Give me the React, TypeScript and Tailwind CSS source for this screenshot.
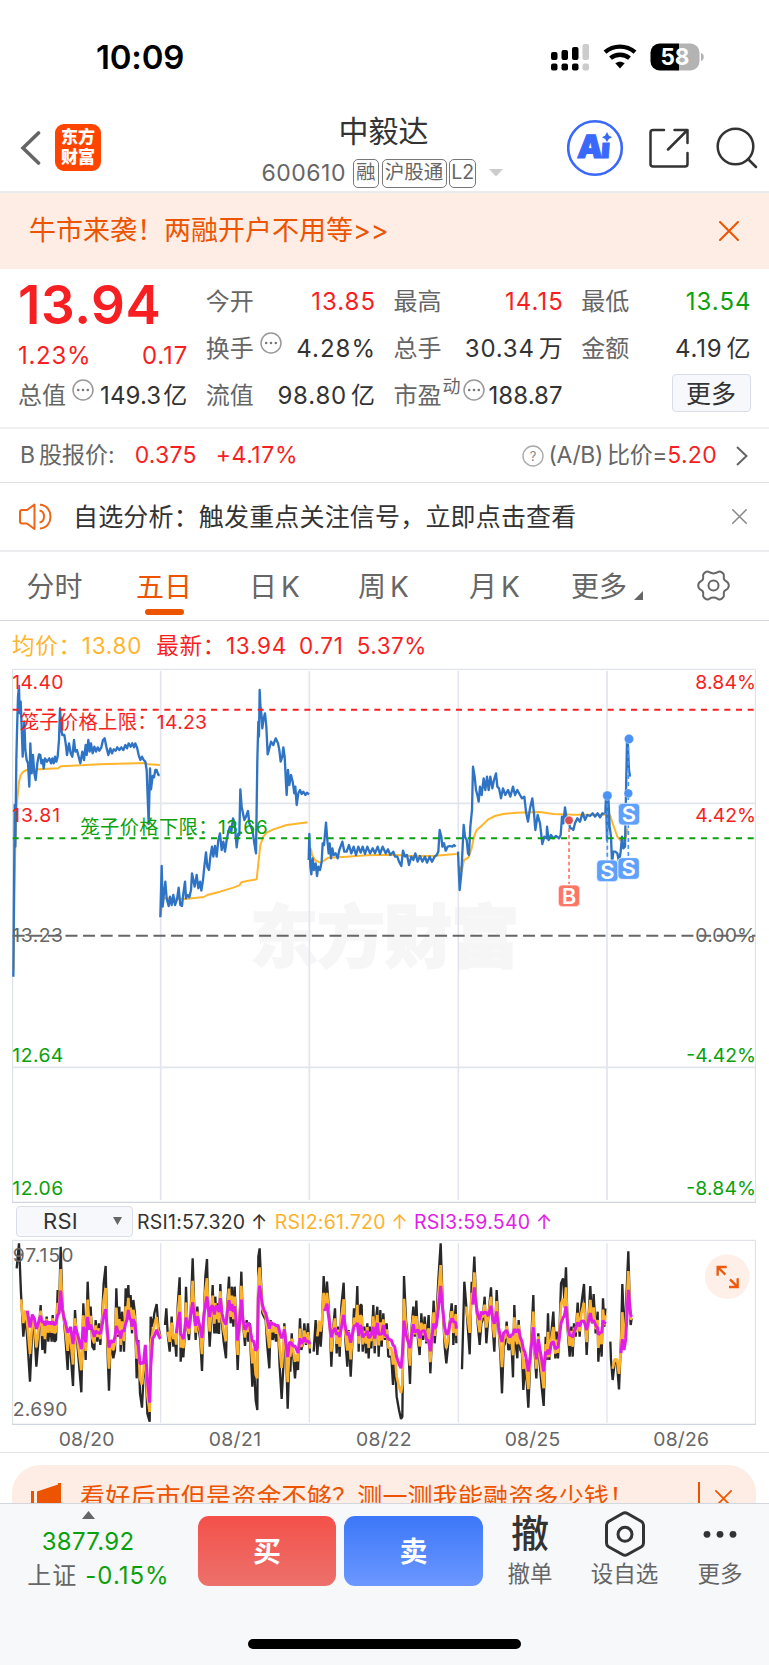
import React from 'react';

type Point = [number, number];

const parse = (s: string, dx = 0, dy = 0): Point[] =>
  s.trim().split(/\s+/).map((p) => {
    const [x, y] = p.split(',').map(Number);
    return [x + dx, y + dy];
  });

const toPoints = (pts: Point[]) => pts.map(([x, y]) => `${x},${y.toFixed(1)}`).join(' ');

// Value of a keyed line at x, flat beyond both ends
const valueAt = (keys: Point[], x: number) => {
  if (x <= keys[0][0]) return keys[0][1];
  for (let i = 1; i < keys.length; i++) {
    const [x0, y0] = keys[i - 1];
    const [x1, y1] = keys[i];
    if (x <= x1) return y0 + ((y1 - y0) * (x - x0)) / (x1 - x0);
  }
  return keys[keys.length - 1][1];
};

const priceDays: Point[][] = [
  parse(`40,950 42,700 44,435 46,560 49,300 51,215 54,110 57,78 59,160 62,125 65,200 68,290 73,185 76,270 80,300 84,310 88,380 91,250 95,340 99,285 103,340 107,360 112,310 117,283 121,285 124,310 128,300 131,325 135,295 141,305 148,295 153,310 157,295 161,310 165,290 169,305 173,290 177,240 180,145 184,210 187,225 193,225 197,250 201,285 207,250 212,280 217,290 222,240 226,275 231,270 236,290 241,310 247,275 252,300 257,255 260,285 265,240 269,275 273,250 278,280 283,260 288,275 293,262 298,272 304,262 309,240 314,235 319,260 325,285 331,265 336,280 341,268 347,272 352,262 358,270 364,262 370,270 376,255 381,265 386,250 392,260 397,250 402,262 406,250 411,262 416,285 421,300 426,290 431,300 436,305 440,330 446,492 450,325 453,388 458,348 462,352 466,330 470,330 475,345 479,345`),
  parse(`481,772 485,618 488,740 492,700 496,665 500,715 506,738 510,710 515,735 520,705 525,735 531,718 536,683 541,735 546,738 550,700 555,665 558,715 563,705 568,712 573,690 576,640 580,660 584,680 590,645 595,685 600,665 604,692 609,660 613,620 618,577 622,620 627,630 631,590 636,560 640,590 645,558 650,590 655,540 660,520 665,570 670,545 675,575 680,540 685,515 690,500 694,515 699,475 704,490 710,562 715,520 718,525 721,388 725,440 729,460 733,480 738,470 744,453 748,490 753,500 758,515 763,550 768,580 772,300 775,185 777,230 779,90 781,135 784,160 787,205 790,180 795,160 799,200 803,283 808,265 813,245 820,255 827,235 834,250 838,270 842,305 847,290 850,262 854,290 858,370 860,405 864,330 868,375 873,345 878,365 883,400 886,380 890,435 895,400 900,390 905,402 910,395 916,405 921,398 927,403`),
  parse(`26,540 28,462 31,560 34,583 38,535 42,570 47,550 51,588 55,560 60,570 65,545 68,490 72,495 78,428 82,480 86,520 89,490 93,535 97,505 101,525 107,520 113,535 118,510 127,485 133,515 140,515 147,495 154,520 161,500 168,525 175,500 182,518 188,500 195,522 202,500 210,520 218,505 225,520 233,500 240,522 248,500 257,520 264,508 271,525 280,515 285,530 292,530 297,545 304,558 309,512 315,530 321,525 327,555 334,530 340,540 346,520 353,545 360,528 367,545 375,530 381,548 389,530 396,545 404,530 410,525 415,515 419,450 424,470 427,500 432,490 437,512 443,500 450,498 457,500 462,495 467,500`, 900, 60),
  parse(`474,515 479,630 484,580 488,500 491,435 495,470 500,480 504,520 507,525 511,440 516,390 519,260 524,290 528,330 532,345 536,365 540,320 545,345 551,295 556,330 561,290 566,330 571,290 577,325 582,300 588,280 592,320 597,325 603,355 609,325 616,345 624,330 631,350 639,320 645,345 652,330 660,345 666,355 673,350 678,395 684,425 690,385 697,355 702,400 706,450 713,405 720,430 727,492 733,470 740,475 741,440 746,480 753,465 760,475 768,468 777,475 782,465 786,410 790,430 795,382 799,410 803,425 807,420 810,445 815,445 820,450 825,430 832,415 840,425 848,398 855,420 862,405 870,408 878,400 885,410 893,400 900,412 907,400 914,402`, 900, 60),
  parse(`916,400 918,350 921,480 925,350 929,440 933,470 936,550 940,515 946,515 952,520 957,545 962,515 966,470 970,505 975,500 978,340 981,185 983,180 987,270 990,290`, 900, 60),
];

const averageDays: Point[][] = [
  parse(`41,930 43,700 46,560 50,440 57,365 62,345 70,335 80,330 130,327 175,325 182,319 215,317 300,313 435,309 445,313 480,315`),
  parse(`483,765 485,730 488,715 555,717 612,711 622,705 660,695 700,683 718,676 724,667 745,662 770,658 774,620 781,555 790,530 800,518 820,508 860,495 890,491 923,487`),
  parse(`33,505 36,525 45,540 60,548 72,542 85,533 140,530 200,526 280,524 330,528 400,528 440,524 470,522`, 900, 60),
  parse(`478,560 485,575 492,540 505,533 515,505 522,470 530,450 545,437 565,418 585,408 610,402 650,398 720,396 760,402 820,404 915,404`, 900, 60),
  parse(`921,400 930,405 938,430 945,450 952,470 960,480 972,482 978,470 983,445`, 900, 60),
];

const rsiFast: Point[][] = [
  parse(`50,265 57,190 63,340 70,470 76,400 82,480 90,605 97,440 103,450 109,560 114,500 118,430 122,375 127,510 131,440 135,520 140,410 145,485 150,430 155,485 158,405 163,485 168,480 173,330 177,400 182,200 187,370 190,400 196,470 203,570 207,470 212,520 219,618 225,390 230,470 236,540 244,637 250,370 257,540 263,305 268,440 272,380 277,500 283,510 287,420 292,485 297,430 301,495 307,400 311,310 317,258 322,500 327,632 332,480 340,535 345,510 349,325 354,470 358,380 362,515 366,395 372,515 377,325 381,380 385,315 389,410 392,345 396,460 400,360 405,400 410,595 415,480 420,640 426,683 430,600 436,530 442,700 449,725 452,410 458,440 463,400 470,372 475,440 481,470`),
  parse(`495,435 499,385 503,460 509,515 515,410 520,500 524,470 529,530 533,380 539,292 542,545 546,470 550,532 555,450 558,320 562,440 567,480 572,400 578,235 583,390 587,480 592,380 597,455 601,480 606,573 611,430 616,290 621,237 625,400 629,500 633,430 638,315 642,440 643,460 646,350 650,460 653,370 657,462 661,312 666,430 671,485 678,535 682,370 687,290 692,430 696,320 700,440 704,320 708,430 713,570 718,440 724,275 729,430 735,498 740,420 745,485 750,430 752,510 757,620 761,530 767,660 772,690 775,230 779,205 783,300 787,400 792,410 797,420 802,500 808,565 812,420 818,480 823,450 828,485 834,440 839,560 845,657 850,560 853,430 858,500 863,686 868,540 871,575 875,460 879,520 885,595 889,540 894,570 900,415 904,510 909,490 913,430 918,495 924,430 930,520`),
  parse(`941,515 947,420 952,525 957,440 962,500 966,440 971,288 976,390 981,305 986,380 990,450 994,560 999,450 1005,385 1010,520 1014,440 1019,530 1024,380 1031,308 1036,480 1042,560 1046,450 1052,590 1058,470 1062,385 1067,440 1072,318 1076,515 1081,375 1085,375 1088,515 1093,440 1098,520 1102,430 1106,535 1110,440 1114,505 1120,375 1124,520 1128,420 1132,380 1136,530 1141,390 1145,500 1150,400 1155,480 1160,430 1165,530 1174,530 1179,615 1184,530 1190,650 1197,690 1203,717 1207,710 1212,288 1218,420 1224,480 1230,612 1235,440 1240,380 1244,470 1249,362 1254,480 1259,525 1264,400 1269,480 1274,410 1279,490 1286,405 1291,580 1296,470 1301,362 1304,490 1309,420 1315,300 1322,190 1328,370 1334,500 1339,550 1344,500 1349,430 1355,370 1359,430 1360,495 1367,375 1369,490`),
  parse(`234,568 241,305 247,380 252,450 257,523 263,305 266,330 271,230 276,360 281,430 287,495 292,430 296,420 302,350 307,490 313,410 321,322 326,440 331,515 338,330 344,450 349,520 354,640 359,500 363,490 368,425 373,510 378,505 382,480 387,592 391,375 396,500 400,535 404,420 409,510 414,520 418,630 423,560 428,600 433,683 438,560 443,450 448,345 452,520 457,595 463,460 468,560 473,620 479,678 485,470 488,540 492,400 496,540 502,460 508,395 514,535 518,455 522,535 527,440 531,310 537,295 541,360 546,262 551,450 557,530 562,440 566,530 570,430 575,470 581,368 587,470 592,375 600,312 608,525 613,420 619,318 624,430 629,342 635,460 641,395 643,545 648,460 653,530 657,355 661,440 664,385`, 1152),
  parse(`679,485 681,540 686,600 692,548 699,550 705,628 711,480 715,312 720,440 725,400 733,214 738,400 740,435 743,415`, 1152),
];

const rsiSlow: Point[][] = [
  parse(`82,380 88,400 91,430 95,395 105,415 110,435 120,410 135,425 150,425 165,428 176,410 182,350 188,400 200,430 206,455 212,430 219,475 225,445 232,455 244,490 250,450 257,480 263,425 268,450 275,435 283,465 290,450 298,465 306,440 317,405 327,485 340,480 350,450 362,470 372,445 378,445 385,400 395,440 402,420 408,450 415,500 420,540 424,520 430,545 436,490 440,560 449,660 453,560 457,480 462,480 470,460 481,478`),
  parse(`529,450 539,410 543,465 550,470 558,425 567,440 575,385 580,385 586,435 593,410 600,435 606,460 611,410 621,365 628,405 634,370 638,385 645,400 650,365 655,400 661,360 668,410 678,420 687,370 693,390 697,375 702,400 705,380 713,470 720,420 724,370 730,430 738,450 745,420 752,450 760,475 765,480 771,515 775,370 779,332 785,360 790,385 800,400 808,430 815,425 825,430 835,435 845,450 853,450 858,490 863,510 870,470 876,500 885,485 893,520 898,480 905,490 915,475 920,490 930,488`),
  parse(`971,400 981,380 988,430 994,460 1003,450 1014,460 1022,465 1030,415 1040,450 1048,460 1053,478 1060,450 1070,430 1075,465 1082,440 1090,475 1100,450 1110,475 1118,440 1125,475 1132,435 1140,475 1150,440 1156,470 1165,470 1178,475 1185,500 1195,530 1204,545 1210,450 1212,440 1220,480 1230,490 1240,440 1248,470 1255,440 1260,475 1270,445 1280,480 1291,505 1300,440 1310,440 1315,400 1322,335 1328,390 1335,440 1343,460 1350,430 1360,415 1369,440`),
  parse(`266,380 271,335 278,390 283,405 287,410 292,390 300,410 307,385 315,415 321,385 326,415 331,420 336,390 345,450 352,470 360,450 370,455 380,470 387,445 392,460 400,440 410,470 418,490 425,520 433,560 440,520 448,455 457,530 463,480 470,510 479,560 485,520 495,525 503,490 510,500 520,510 530,450 537,430 546,395 552,440 560,470 570,460 575,440 582,435 590,435 597,420 602,450 608,440 619,410 627,435 633,425 640,450 650,460 657,430 664,430`, 1152),
  parse(`711,525 715,500 720,520 724,510 728,430 733,345 738,380 741,410`, 1152),
];

// The slower averages follow the fast one with less swing
const rsiLines = rsiFast.map((fast, i) => {
  const slow = rsiSlow[i];
  const start = slow[0][0];
  return {
    fast,
    mid: fast.slice(2).map(([x, y]): Point => [x, 0.55 * y + 0.45 * valueAt(slow, x)]),
    slow: fast.filter(([x]) => x >= start).map(([x, y]): Point => [x, 0.88 * valueAt(slow, x) + 0.12 * y]),
  };
});

const RED = '#f71f22';
const GREEN = '#0ba10b';
const dayLines = [482, 928, 1375, 1821];

const ChartText = (props: { x: number; y: number; w: number; fill: string; size?: number; end?: boolean; children: string }) => (
  <text x={props.x} y={props.y} fontSize={props.size ?? 58} textLength={props.w} fill={props.fill} textAnchor={props.end ? 'end' : 'start'}>
    {props.children}
  </text>
);

const TradeBadge = ({ x, y, label, color }: { x: number; y: number; label: string; color: string }) => (
  <g>
    <rect x={x} y={y} width="64" height="65" rx="12" fill={color} stroke="#fff" strokeWidth="2" />
    <text x={x + 32} y={y + 56} fontSize="66" fontWeight="600" fill="#fff" textAnchor="middle">{label}</text>
  </g>
);

const PriceChart = () => (
  <svg className="block w-[769px] h-[544px]" viewBox="0 0 2307 1632">
    <text x="750" y="905" fontSize="204" fontWeight="900" textLength="808" fill="#f6f6f6" stroke="#f6f6f6" strokeWidth="5">东方财富</text>
    <g stroke="#e2e5ee" strokeWidth="5">
      <path d="M38 430H2266M38 1222H2266" />
      {dayLines.map((x) => <path key={x} d={`M${x} 33V1620`} />)}
    </g>
    <path d="M38 28H2266V1627H38Z" fill="none" stroke="#dadee6" strokeWidth="3" />
    <path d="M36 1627H2268" stroke="#ccd2dc" strokeWidth="3" />
    <g fill="none" strokeLinejoin="round">
      {averageDays.map((d, i) => <polyline key={i} points={toPoints(d)} stroke="#ffb52c" strokeWidth="6" />)}
      {priceDays.map((d, i) => <polyline key={i} points={toPoints(d)} stroke="#2f74c4" strokeWidth="7" />)}
    </g>
    <path d="M38 149H2266" stroke={RED} strokeWidth="6" strokeDasharray="18 17" />
    <path d="M38 535H2266" stroke={GREEN} strokeWidth="6" strokeDasharray="18 17" />
    <path d="M38 827H2266" stroke="#666" strokeWidth="6" strokeDasharray="36 16.800" />
    <ChartText x={37} y={87} w={153} fill={RED}>14.40</ChartText>
    <ChartText x={37} y={486} w={143} fill={RED}>13.81</ChartText>
    <ChartText x={37} y={845} w={152} fill="#666">13.23</ChartText>
    <ChartText x={37} y={1207} w={153} fill={GREEN}>12.64</ChartText>
    <ChartText x={37} y={1605} w={153} fill={GREEN}>12.06</ChartText>
    <ChartText x={2268} y={87} w={182} fill={RED} end>8.84%</ChartText>
    <ChartText x={2268} y={486} w={182} fill={RED} end>4.42%</ChartText>
    <ChartText x={2268} y={845} w={182} fill="#666" end>0.00%</ChartText>
    <ChartText x={2268} y={1207} w={209} fill={GREEN} end>-4.42%</ChartText>
    <ChartText x={2268} y={1605} w={209} fill={GREEN} end>-8.84%</ChartText>
    <ChartText x={59} y={208} w={562} fill={RED}>笼子价格上限：14.23</ChartText>
    <ChartText x={241} y={522} w={562} fill={GREEN}>笼子价格下限：13.66</ChartText>
    <path d="M1707 485V672" stroke="#fd7565" strokeWidth="5" strokeDasharray="11 9" />
    <path d="M1822 410V600M1885 240V595" stroke="#4593ff" strokeWidth="5" strokeDasharray="12 9" />
    <circle cx="1707" cy="481" r="13" fill="#dc4f51" stroke="#fff" strokeWidth="2" />
    <circle cx="1822" cy="407" r="14" fill="#4a92f6" stroke="#fff" strokeWidth="1" />
    <circle cx="1887" cy="237" r="14" fill="#4a92f6" stroke="#fff" strokeWidth="1" />
    <circle cx="1885" cy="400" r="13" fill="#4a92f6" stroke="#fff" strokeWidth="1" />
    <TradeBadge x={1675} y={675} label="B" color="#fd7565" />
    <TradeBadge x={1790} y={600} label="S" color="#5ea0fb" />
    <TradeBadge x={1854} y={593} label="S" color="#5ea0fb" />
    <TradeBadge x={1855} y={430} label="S" color="#5ea0fb" />
  </svg>
);

const RsiChart = () => (
  <svg className="block w-[769px] h-[214px]" viewBox="0 174 2307 642">
    <g stroke="#e2e5ee" strokeWidth="4">
      {dayLines.map((x) => <path key={x} d={`M${x} 190V728`} />)}
    </g>
    <path d="M38 181H2266V733H38Z" fill="none" stroke="#dadee6" strokeWidth="3" />
    <path d="M36 733H2268" stroke="#ccd2dc" strokeWidth="3" />
    <ChartText x={38} y={709} w={164} fill="#666">2.690</ChartText>
    {rsiLines.map((d, i) => (
      <g key={i} fill="none" strokeLinejoin="bevel">
        <polyline points={toPoints(d.fast)} stroke="#282828" strokeWidth="7" />
        <polyline points={toPoints(d.mid)} stroke="#fdb22d" strokeWidth="8" />
        <polyline points={toPoints(d.slow)} stroke="#e11ee6" strokeWidth="9" />
      </g>
    ))}
    <ChartText x={38} y={245} w={182} fill="#666">97.150</ChartText>
    <circle cx="2182" cy="290" r="67" fill="#fef0e9" />
    <path d="M2153 287V261H2180M2154 262L2176 284M2187 321H2213V295M2212 320L2190 298" fill="none" stroke="#ec5b0d" strokeWidth="7" />
    <ChartText x={176} y={797} w={167} fill="#666">08/20</ChartText>
    <ChartText x={626} y={797} w={157} fill="#666">08/21</ChartText>
    <ChartText x={1068} y={797} w={167} fill="#666">08/22</ChartText>
    <ChartText x={1514} y={797} w={167} fill="#666">08/25</ChartText>
    <ChartText x={1960} y={797} w={167} fill="#666">08/26</ChartText>
  </svg>
);

const More = ({ className = '' }: { className?: string }) => (
  <svg className={`w-[22px] h-[22px] shrink-0 ${className}`} viewBox="0 0 22 22">
    <circle cx="11" cy="11" r="10" fill="none" stroke="#999" strokeWidth="1.5" />
    <circle cx="6.2" cy="11" r="1.3" fill="#777" />
    <circle cx="11" cy="11" r="1.3" fill="#777" />
    <circle cx="15.8" cy="11" r="1.3" fill="#777" />
  </svg>
);

const Close = ({ className }: { className: string }) => (
  <svg className={className} viewBox="0 0 20 20" fill="none" stroke="currentColor" strokeWidth="2" strokeLinecap="round">
    <path d="M1 1L19 19M19 1L1 19" />
  </svg>
);

const StatusBar = () => (
  <div className="h-[110px] flex items-start justify-between pl-[96px] pr-[65px]">
    <span className="mt-[37px] text-[33px] leading-[40px] font-semibold text-black tracking-[-0.200px]">10:09</span>
    <svg className="mt-[43px] w-[153px] h-[29px]" viewBox="0 0 153 29">
      <g fill="#000">
        <rect x="0" y="9" width="6.5" height="8" rx="2" />
        <rect x="10.5" y="7" width="6.5" height="10" rx="2" />
        <rect x="21" y="4" width="6.5" height="13" rx="2" />
        <rect x="0" y="20.5" width="6.5" height="7" rx="2" />
        <rect x="10.5" y="20.5" width="6.5" height="7" rx="2" />
        <rect x="21" y="20.5" width="6.5" height="7" rx="2" />
      </g>
      <rect x="31.5" y="1" width="6.5" height="16" rx="2" fill="#ccc" />
      <rect x="31.5" y="20.5" width="6.5" height="7" rx="2" fill="#ccc" />
      <g fill="none" stroke="#000" strokeWidth="4.3">
        <path d="M54 9.2C62.5 1.8 75.5 1.8 84 9.2" />
        <path d="M59.5 15.2C65 10.6 73 10.6 78.5 15.2" />
      </g>
      <path d="M64.3 20.3C67 18.2 71 18.2 73.7 20.3L69 25.6Z" fill="#000" />
      <clipPath id="battery"><rect x="99.500" y="0.500" width="49" height="27" rx="9" /></clipPath>
      <g clipPath="url(#battery)">
        <rect x="99" y="0" width="29" height="28" fill="#000" />
        <rect x="128" y="0" width="21" height="28" fill="#b3b3b3" />
      </g>
      <path d="M150 10C153.700 11 153.700 17 150 18Z" fill="#b3b3b3" />
      <text x="124" y="22" fontSize="22.500" fontWeight="700" fill="#fff" textAnchor="middle">58</text>
    </svg>
  </div>
);

const Tag = ({ children, className = 'px-[2.500px]' }: { children: React.ReactNode; className?: string }) => (
  <span className={`h-[29px] flex items-center justify-center border border-[#777] rounded-[5px] text-[19.500px] leading-none text-[#666] ${className}`}>{children}</span>
);

const Header = () => (
  <div className="h-[83px] flex justify-between border-b-2 border-[#ebebed]">
    <div className="w-[240px] flex items-start pl-[20px] pt-[14px]">
      <svg className="mt-[7px] w-[21px] h-[34px]" viewBox="0 0 21 34" fill="none" stroke="#666" strokeWidth="3.6" strokeLinecap="round">
        <path d="M18.500 2L3 17L18.500 32" />
      </svg>
      <div className="ml-[14px] w-[46px] h-[47px] rounded-[9px] bg-[#ff4400] flex flex-col items-center justify-center text-white font-black text-[17px] leading-[19.500px]">
        <span>东方</span>
        <span>财富</span>
      </div>
    </div>
    <div className="flex-1 flex flex-col items-center">
      <span className="-ml-[2px] text-[30px] leading-[43px] text-[#333]">中毅达</span>
      <div className="flex items-center h-[34px] mt-[3px] -ml-[5px] gap-[2.500px]">
        <span className="text-[23px] tracking-[0.550px] text-[#666] mr-[4px]">600610</span>
        <Tag>融</Tag>
        <Tag className="w-[65px]">沪股通</Tag>
        <Tag className="w-[27px]">L2</Tag>
        <svg className="ml-[10px] w-[14px] h-[8px]" viewBox="0 0 14 8"><path d="M0 0H14L7 7.500Z" fill="#ccc" /></svg>
      </div>
    </div>
    <div className="w-[240px] flex justify-end pr-[10.500px] pt-[9px]">
      <svg className="w-[192px] h-[58px]" viewBox="0 0 192 58" fill="none">
        <circle cx="28" cy="29" r="26.800" stroke="#3a68fc" strokeWidth="2.600" />
        <g transform="translate(2.500 0) skewX(-4)">
          <text x="10" y="39" fontSize="32" fontWeight="900" fill="#3a68fc" stroke="#3a68fc" strokeWidth="1" textLength="33">Ai</text>
        </g>
        <rect x="34" y="12" width="12" height="11.500" fill="#fff" />
        <path d="M40 13L41.800 16.500L45 18.200L41.800 20L40 23L38.200 20L35 18.200L38.200 16.500Z" fill="#3a68fc" />
        <g stroke="#333" strokeWidth="2.500" strokeLinecap="round" strokeLinejoin="round">
          <path d="M97 11H86C84.500 11 83.500 12 83.500 13.500V45C83.500 46.500 84.500 47.500 86 47.500H118C119.500 47.500 120.500 46.500 120.500 45V34M107.500 11H120.500V24M120.500 11L101 30.500" />
          <circle cx="168.500" cy="27.500" r="17.800" />
          <path d="M181 40L189 48" />
        </g>
      </svg>
    </div>
  </div>
);

type FieldProps = { label: string; value: string; unit?: string; color?: string; icon?: boolean; sup?: string };

const Field = ({ label, value, unit, color = 'text-[#333]', icon, sup }: FieldProps) => {
  const tight = sup || (icon && unit);
  return (
    <div className="h-[47px] flex items-center justify-between whitespace-nowrap">
      <span className="flex items-center text-[#666]">
        {label}
        {sup && <span className="text-[18px] leading-none -mt-[17px] ml-[1px]">{sup}</span>}
        {icon && <More className={sup ? '-mt-[12px] ml-[2px]' : '-mt-[12px] ml-[6px]'} />}
      </span>
      <span className={color}>
        <span className={tight ? 'tracking-[0.100px]' : unit ? 'tracking-[0.800px]' : 'tracking-[1px] -mr-[1px]'}>{value}</span>
        {unit && <span className={tight ? 'ml-[2px]' : 'ml-[4px]'}>{unit}</span>}
      </span>
    </div>
  );
};

const Quote = () => (
  <div className="h-[160px] border-b-2 border-[#f0f0f2] grid grid-cols-4 gap-[18.500px] pl-[18px] pr-[18.500px] pt-[9px] text-[24px] leading-[47px]">
    <div>
      <div className="h-[59px] text-[53px] leading-[55px] font-semibold text-[#f71f22] tracking-[0.600px]">13.94</div>
      <div className="h-[35px] flex justify-between items-center leading-[35px] tracking-[0.700px] text-[#f71f22]">
        <span className="mt-[2px]">1.23%</span>
        <span className="mt-[2px] tracking-[0.900px] -mr-[1px]">0.17</span>
      </div>
      <Field label="总值" value="149.3" unit="亿" icon />
    </div>
    <div>
      <Field label="今开" value="13.85" color="text-[#f71f22]" />
      <Field label="换手" value="4.28%" icon />
      <Field label="流值" value="98.80" unit="亿" />
    </div>
    <div>
      <Field label="最高" value="14.15" color="text-[#f71f22]" />
      <Field label="总手" value="30.34" unit="万" />
      <Field label="市盈" sup="动" value="188.87" icon />
    </div>
    <div>
      <Field label="最低" value="13.54" color="text-[#0ba10b]" />
      <Field label="金额" value="4.19" unit="亿" />
      <div className="flex justify-end pt-[2px]">
        <button className="w-[79px] h-[38px] rounded-[4px] border border-[#d8dde6] bg-[#f7f8fb] text-[25px] leading-[38px] text-[#333]">更多</button>
      </div>
    </div>
  </div>
);

const tabs = [
  { name: '分时', width: 'w-[109px]' },
  { name: '五日', width: 'w-[110px]' },
  { name: '日K', width: 'w-[111px]' },
  { name: '周K', width: 'w-[107px]' },
  { name: '月K', width: 'w-[115px]' },
  { name: '更多', width: 'w-[94px]' },
];

const Tabs = () => (
  <div className="h-[69px] border-b border-[#d4d6dc] flex text-[28px] leading-[70px] text-[#666]">
    {tabs.map((tab) => (
      <div key={tab.name} className={`flex flex-col items-center ${tab.width}`}>
        <span className={tab.name === '五日' ? 'h-[57px] text-[#ec5400]' : 'h-[57px]'}>
          {tab.name.endsWith('K') ? <>{tab.name[0]}<span className="ml-[4px]">K</span></> : tab.name}
          {tab.name === '更多' && (
            <svg className="inline ml-[7px] -mr-[16px] -mb-[12px] w-[9px] h-[9px]" viewBox="0 0 8 8"><path d="M8 0V8H0Z" fill="#666" /></svg>
          )}
        </span>
        {tab.name === '五日' && <i className="w-[39px] h-[6px] rounded-full bg-[#ec5400]" />}
      </div>
    ))}
    <svg className="ml-[50.500px] mt-[18px] w-[33px] h-[31px]" viewBox="0 0 33 31" fill="none" stroke="#666" strokeWidth="2">
      <circle cx="16.500" cy="15.500" r="5" />
      <path d="M10.500 1.500C12 1.500 13 3.500 16.500 3.500S21 1.500 22.500 1.500S26.500 3.500 26.800 4.800S26 8.500 27.500 10S31.800 11.500 31.800 15.500S29 19.500 27.500 21S27.200 24.800 26.800 26.200S24 29.500 22.500 29.500S20 27.500 16.500 27.500S12 29.500 10.500 29.500S6.500 27.500 6.200 26.200S7 22.500 5.500 21S1.200 19.500 1.200 15.500S4 11.500 5.500 10S5.800 6.200 6.200 4.800S9 1.500 10.500 1.500Z" />
    </svg>
  </div>
);

const Promo = () => (
  <div className="h-[51px] border-t border-[#e4e4e6] pt-[12px] pl-[12px] pr-[13px] overflow-hidden">
    <div className="h-[66px] rounded-[28px] bg-[#fdede5] flex items-center pl-[19px] text-[25px] text-[#ec5400]">
      <svg className="w-[30px] h-[30px]" viewBox="0 0 30 30" fill="#ec5400">
        <path d="M0 8H3V24H0ZM6 8.500L27 1.500V0H30V30H27L6 24Z" />
      </svg>
      <span className="ml-[19px] tracking-[0.200px] whitespace-nowrap">看好后市但是资金不够？测一测我能融资多少钱！</span>
      <i className="ml-[64px] w-[2px] h-[32px] bg-[#ec5400]" />
      <Close className="ml-[15px] w-[17px] h-[17px]" />
    </div>
  </div>
);

const BottomBar = () => (
  <div className="h-[162px] border-t border-[#d3d7de] bg-[#f7f8fa] flex flex-col justify-between">
    <div className="flex pt-[7px]">
      <div className="w-[198px] pr-[22px] shrink-0 flex flex-col items-center text-[24px] text-[#0ba10b]">
        <svg className="w-[13px] h-[8px]" viewBox="0 0 13 8"><path d="M6.500 0L13 8H0Z" fill="#666" /></svg>
        <span className="mt-[6px] leading-[34px] tracking-[0.300px]">3877.92</span>
        <span className="leading-[34px] ml-[21px] tracking-[1px] whitespace-nowrap"><span className="text-[#666] mr-[8px]">上证</span>-0.15%</span>
      </div>
      <button className="mt-[5px] w-[138px] h-[70px] rounded-[11px] bg-linear-to-b from-[#f35049] to-[#ed706b] text-white text-[28px] leading-[72px] font-bold">买</button>
      <button className="mt-[5px] ml-[8px] w-[139px] h-[70px] rounded-[11px] bg-linear-to-b from-[#3c77f8] to-[#6b97ff] text-white text-[28px] leading-[72px] font-bold">卖</button>
      <div className="w-[94px] flex flex-col items-center text-[22.500px] text-[#666]">
        <span className="text-[38px] leading-[44px] h-[48px] text-[#333] font-medium">撤</span>
        <span className="leading-[29px]">撤单</span>
      </div>
      <div className="w-[95px] flex flex-col items-center text-[22.500px] text-[#666]">
        <svg className="w-[42px] h-[48px]" viewBox="0 0 42 48" fill="none" stroke="#333" strokeWidth="3" strokeLinejoin="round">
          <path d="M18.500 2.500Q21 1 23.500 2.500L37.500 10.500Q39.500 12 39.500 14V32Q39.500 34.500 37.500 35.800L23.500 43.500Q21 45 18.500 43.500L4.500 35.800Q2.500 34.500 2.500 32V14Q2.500 12 4.500 10.500Z" />
          <circle cx="21" cy="23.300" r="7" />
        </svg>
        <span className="leading-[29px]">设自选</span>
      </div>
      <div className="w-[96px] flex flex-col items-center text-[22.500px] text-[#666]">
        <svg className="w-[34px] h-[48px]" viewBox="0 0 34 48" fill="#333">
          <circle cx="4" cy="23.300" r="3.400" /><circle cx="17" cy="23.300" r="3.400" /><circle cx="30" cy="23.300" r="3.400" />
        </svg>
        <span className="leading-[29px]">更多</span>
      </div>
    </div>
    <div className="mx-auto mb-[16px] w-[273px] h-[10px] rounded-full bg-black" />
  </div>
);

export default function App() {
  return (
    <div className="w-[769px] h-[1665px] overflow-hidden bg-white font-[Inter,'Noto_Sans_CJK_SC',sans-serif]">
      <StatusBar />
      <Header />
      <div className="h-[76px] bg-[#fdede5] flex items-center justify-between pl-[29px] pr-[30px] text-[27px] text-[#ec5400]">
        <span className="mt-[1px]">牛市来袭！两融开户不用等&gt;&gt;</span>
        <Close className="w-[20px] h-[20px]" />
      </div>
      <Quote />
      <div className="h-[54px] border-b border-[#e2e2e4] flex items-center pl-[20px] pr-[21px] text-[23px] text-[#666]">
        <span>B</span>
        <span className="ml-[4px]">股报价:</span>
        <span className="ml-[20px] tracking-[0.200px] text-[#f71f22]">0.375</span>
        <span className="ml-[19px] tracking-[0.600px] text-[#f71f22]">+4.17%</span>
        <svg className="ml-auto mr-[5px] w-[22px] h-[22px]" viewBox="0 0 22 22">
          <circle cx="11" cy="11" r="10" fill="none" stroke="#aaa" strokeWidth="1.400" />
          <text x="11" y="15.500" fontSize="13" fill="#888" textAnchor="middle">?</text>
        </svg>
        <span className="tracking-[-0.400px]">(A/B)</span>
        <span className="ml-[4px] tracking-[-0.300px]">比价=</span>
        <span className="tracking-[0.300px] text-[#f71f22]">5.20</span>
        <svg className="ml-[19px] w-[12px] h-[20px]" viewBox="0 0 12 20" fill="none" stroke="#666" strokeWidth="2"><path d="M1 1L10.500 10L1 19" /></svg>
      </div>
      <div className="h-[69px] border-b-2 border-[#ececee] flex items-center pl-[19px] pr-[22px] text-[25px] text-[#333]">
        <svg className="w-[34px] h-[28px]" viewBox="0 0 34 28" fill="none" stroke="#ee6518" strokeWidth="2" strokeLinejoin="round">
          <path d="M15.500 1.500V26L8 20.500H3Q1 20.500 1 18.500V9Q1 7 3 7H8Z" />
          <path d="M20.500 7.500C26.500 8.500 26.500 18.500 20.500 19.500M21 1.800C35 2.500 35 25 21 25.500" />
        </svg>
        <span className="ml-[20px] mt-[2px] tracking-[0.170px]">自选分析：触发重点关注信号，立即点击查看</span>
        <Close className="ml-auto w-[15px] h-[15px] text-[#888]" />
      </div>
      <Tabs />
      <div className="h-[39px] pt-[8px] pl-[12px] flex text-[22.500px] leading-[34px] tracking-[0.750px] whitespace-nowrap">
        <span className="text-[#ffb52c]">均价：13.80</span>
        <span className="ml-[14px] text-[#f71f22]">最新：13.94</span>
        <span className="ml-[12px] text-[#f71f22]">0.71</span>
        <span className="ml-[13px] tracking-[0.500px] text-[#f71f22]">5.37%</span>
      </div>
      <PriceChart />
      <div className="h-[34px] pb-[1px] pt-[1px] pl-[16px] flex items-center text-[19.500px] tracking-[0.250px] whitespace-nowrap">
        <button className="w-[117px] h-[31px] rounded-[4px] border border-[#d8dde6] bg-[#f7f8fb] flex items-center justify-between pl-[26px] pr-[10px] text-[22px] leading-none text-[#333]">
          RSI
          <svg className="w-[9px] h-[8px]" viewBox="0 0 9 8"><path d="M0 0H9L4.500 8Z" fill="#666" /></svg>
        </button>
        <span className="ml-[4px] mt-[3px] text-[#333]">RSI1:57.320 ↑</span>
        <span className="ml-[7px] mt-[3px] text-[#fdb22d]">RSI2:61.720 ↑</span>
        <span className="ml-[6px] mt-[3px] text-[#e11ee6]">RSI3:59.540 ↑</span>
      </div>
      <RsiChart />
      <Promo />
      <BottomBar />
    </div>
  );
}
